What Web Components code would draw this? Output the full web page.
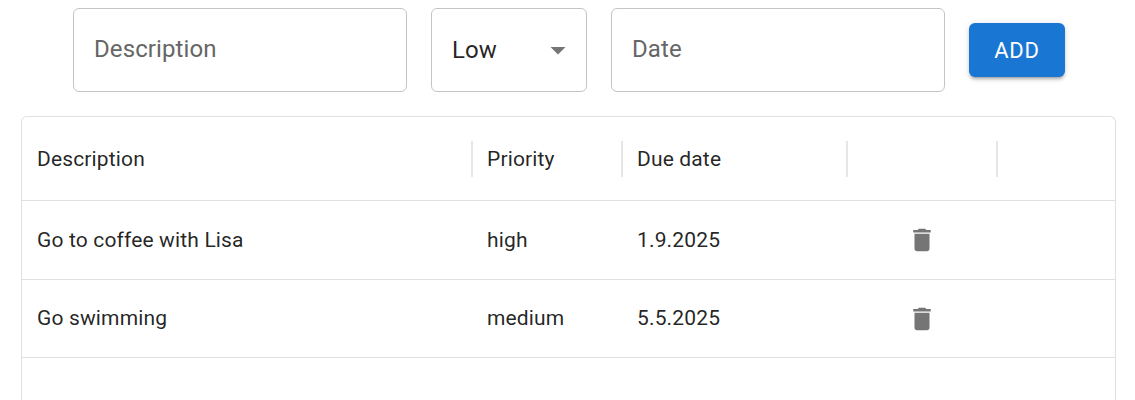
<!DOCTYPE html>
<html>
<head>
<meta charset="utf-8">
<title>Todos</title>
<style>
    html, body { margin: 0; height: 400px; overflow: hidden; background: #fff; }
    body { font-family: Roboto, "Liberation Sans", sans-serif; color: rgba(0,0,0,0.87); }
</style>
</head>
<body>
<todo-app></todo-app>

<script>
class TextField extends HTMLElement {
    constructor() {
        super();
        this.attachShadow({ mode: 'open' });
        this.shadowRoot.innerHTML = `
            <style>
                :host {
                    display: flex;
                    align-items: center;
                    box-sizing: border-box;
                    width: 334px;
                    height: 84px;
                    padding: 0 20px;
                    border: 1px solid #c4c4c4;
                    border-radius: 6px;
                    font-size: 24px;
                    letter-spacing: 0.1px;
                    color: #666;
                }
                span { margin-bottom: 2px; }
            </style>
            <span><slot></slot></span>
        `;
    }
}

class SelectField extends HTMLElement {
    constructor() {
        super();
        this.attachShadow({ mode: 'open' });
        this.shadowRoot.innerHTML = `
            <style>
                :host {
                    display: flex;
                    align-items: center;
                    justify-content: space-between;
                    box-sizing: border-box;
                    width: 156px;
                    height: 84px;
                    padding: 0 10px 0 20px;
                    border: 1px solid #c4c4c4;
                    border-radius: 6px;
                    font-size: 24px;
                    letter-spacing: 0.1px;
                    color: rgba(0,0,0,0.87);
                }
                svg { display: block; width: 36px; height: 36px; fill: #757575; }
            </style>
            <span><slot></slot></span>
            <svg viewBox="0 0 24 24"><path d="M7 10l5 5 5-5z"/></svg>
        `;
    }
}

class AddButton extends HTMLElement {
    constructor() {
        super();
        this.attachShadow({ mode: 'open' });
        this.shadowRoot.innerHTML = `
            <style>
                :host {
                    display: flex;
                    align-items: center;
                    justify-content: center;
                    width: 96px;
                    height: 54px;
                    border-radius: 6px;
                    background: #1976d2;
                    color: #fff;
                    font-size: 22px;
                    font-weight: 400;
                    letter-spacing: 0.8px;
                    box-shadow: 0 4px 2px -3px rgba(0,0,0,0.2), 0 3px 3px 0 rgba(0,0,0,0.14), 0 1px 7px 0 rgba(0,0,0,0.12);
                }
            </style>
            <slot></slot>
        `;
    }
}

class TodoForm extends HTMLElement {
    constructor() {
        super();
        this.attachShadow({ mode: 'open' });
        this.shadowRoot.innerHTML = `
            <style>
                :host {
                    display: flex;
                    align-items: center;
                    gap: 24px;
                    padding-left: 73px;
                    height: 84px;
                }
            </style>
            <text-field>Description</text-field>
            <select-field>Low</select-field>
            <text-field>Date</text-field>
            <add-button>ADD</add-button>
        `;
    }
}

// columns are shared by the header and the rows
const COLUMNS = '450px 150px 225px 150px 1fr';

class GridHeader extends HTMLElement {
    constructor() {
        super();
        this.attachShadow({ mode: 'open' });
        const labels = ['Description', 'Priority', 'Due date', '', ''];
        const cells = labels.map((label, i) => `
            <div class="cell">
                <span class="label">${label}</span>
                ${i < 4 ? '<i class="sep"></i>' : ''}
            </div>
        `).join('');
        this.shadowRoot.innerHTML = `
            <style>
                :host {
                    display: grid;
                    grid-template-columns: ${COLUMNS};
                    height: 83px;
                    border-bottom: 1px solid #e0e0e0;
                    font-size: 21px;
                    letter-spacing: 0.15px;
                }
                .cell { display: flex; align-items: center; padding-left: 15px; }
                .label { flex: 1; }
                .sep { width: 2px; height: 36px; margin-right: -1px; background: #e6e6e6; }
            </style>
            ${cells}
        `;
    }
}

class GridRow extends HTMLElement {
    constructor() {
        super();
        this.attachShadow({ mode: 'open' });
    }

    connectedCallback() {
        const description = this.getAttribute('description');
        const priority = this.getAttribute('priority');
        const date = this.getAttribute('date');

        this.shadowRoot.innerHTML = `
            <style>
                :host {
                    display: grid;
                    grid-template-columns: ${COLUMNS};
                    align-items: center;
                    height: 77.5px;
                    border-bottom: 1px solid #e0e0e0;
                    font-size: 21px;
                    letter-spacing: 0.15px;
                }
                .cell { padding-left: 15px; }
                .action { display: flex; justify-content: center; margin-top: 1px; }
                svg { display: block; width: 30px; height: 30px; fill: #757575; }
            </style>
            <div class="cell">${description}</div>
            <div class="cell">${priority}</div>
            <div class="cell">${date}</div>
            <div class="action">
                <svg viewBox="0 0 24 24"><path d="M6 19c0 1.1.9 2 2 2h8c1.1 0 2-.9 2-2V7H6v12zM19 4h-3.5l-1-1h-5l-1 1H5v2h14V4z"/></svg>
            </div>
        `;
    }
}

class TodoGrid extends HTMLElement {
    constructor() {
        super();
        this.attachShadow({ mode: 'open' });
        this.shadowRoot.innerHTML = `
            <style>
                :host {
                    display: block;
                    box-sizing: border-box;
                    margin: 24px 19px 0 21px;
                    height: 284px;
                    border: 1px solid #e0e0e0;
                    border-bottom: 0;
                    border-radius: 6px 6px 0 0;
                }
            </style>
            <grid-header></grid-header>
            <grid-row description="Go to coffee with Lisa" priority="high" date="1.9.2025"></grid-row>
            <grid-row description="Go swimming" priority="medium" date="5.5.2025"></grid-row>
        `;
    }
}

class TodoApp extends HTMLElement {
    constructor() {
        super();
        this.attachShadow({ mode: 'open' });
        this.shadowRoot.innerHTML = `
            <style>
                :host { display: block; padding-top: 8px; }
            </style>
            <todo-form></todo-form>
            <todo-grid></todo-grid>
        `;
    }
}

customElements.define('text-field', TextField);
customElements.define('select-field', SelectField);
customElements.define('add-button', AddButton);
customElements.define('todo-form', TodoForm);
customElements.define('grid-header', GridHeader);
customElements.define('grid-row', GridRow);
customElements.define('todo-grid', TodoGrid);
customElements.define('todo-app', TodoApp);
</script>
</body>
</html>
